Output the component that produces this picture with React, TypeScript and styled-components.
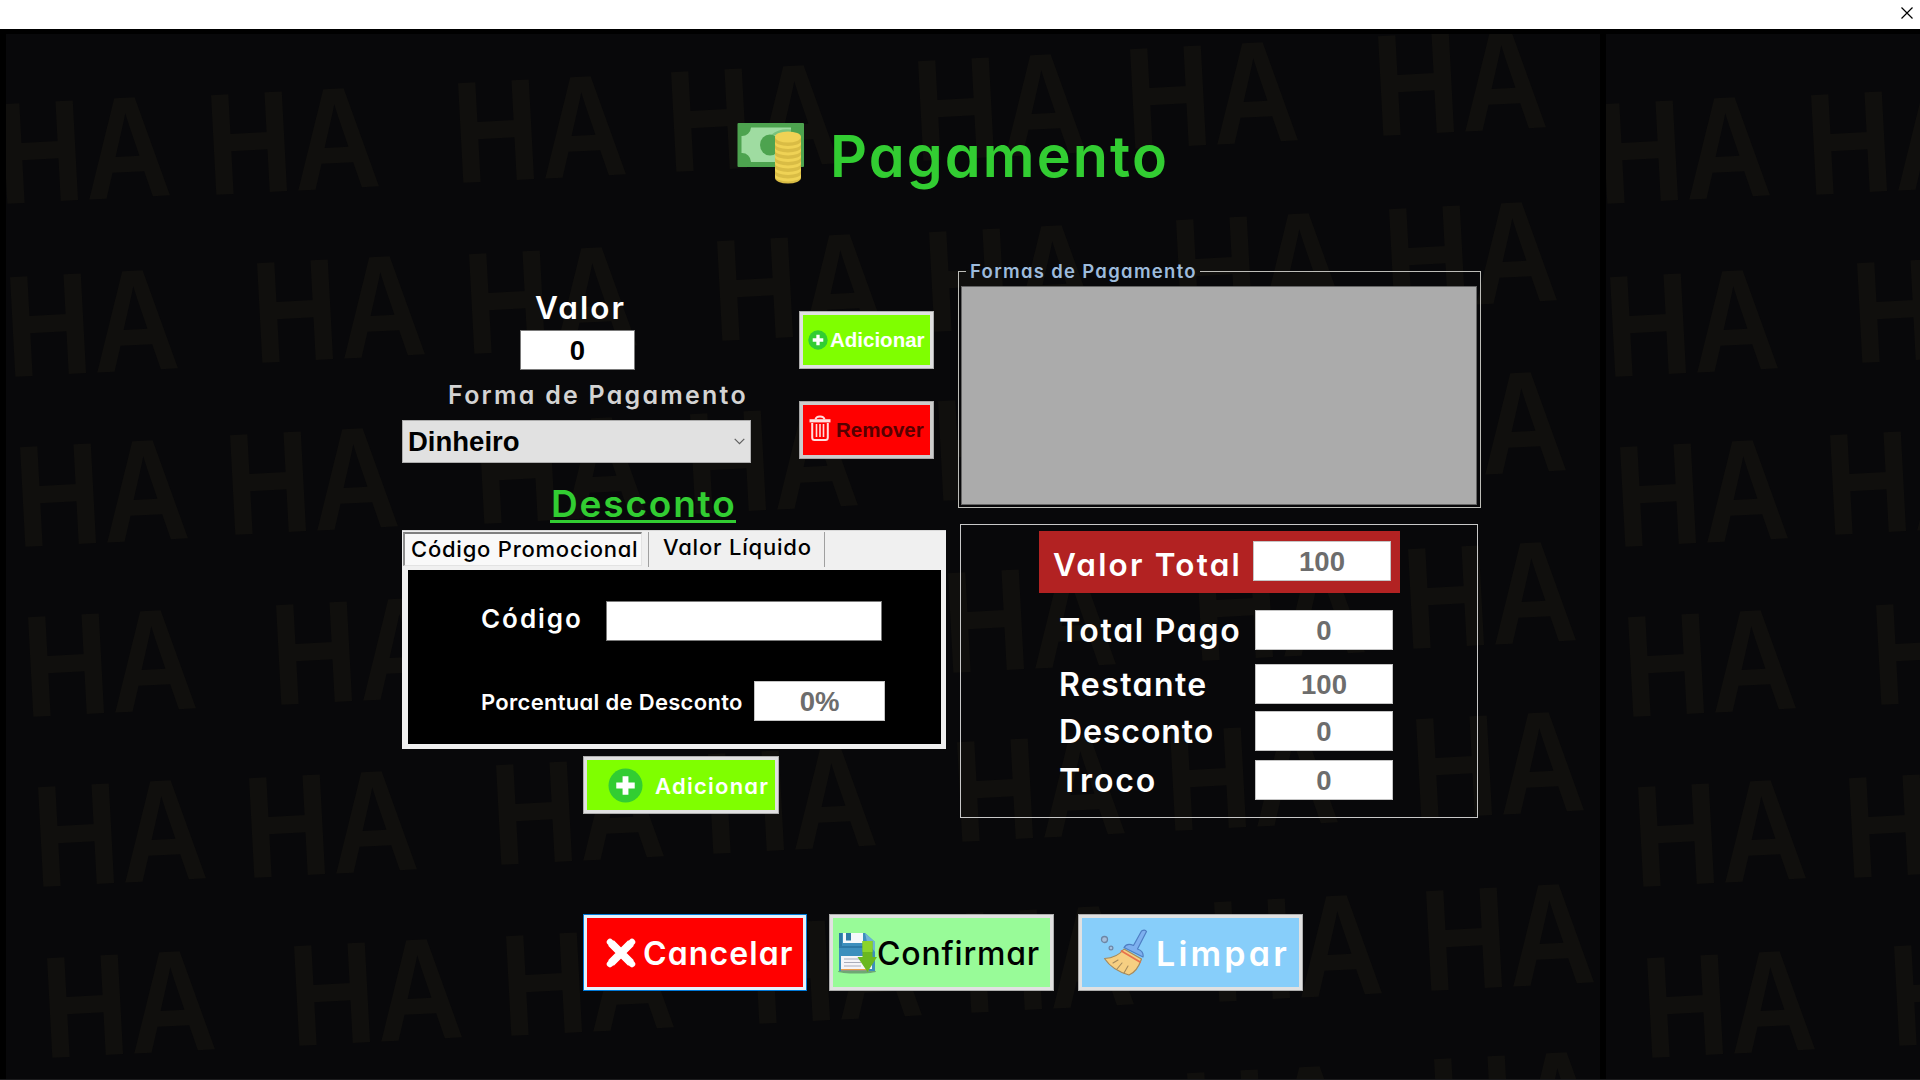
import React from 'react';
import styled, { createGlobalStyle } from 'styled-components';

const GlobalStyle = createGlobalStyle`
  * { box-sizing: border-box; }
  body { margin: 0; background: #08080a; overflow: hidden; }
`;

const ROUND_FONT = "Inter, 'Liberation Sans', sans-serif";
const UI_FONT = "'Liberation Sans', Arial, sans-serif";

const Shell = styled.div`
  display: flex;
  flex-direction: column;
  width: 1920px;
  height: 1080px;
  overflow: hidden;
`;

const TitleBar = styled.header`
  display: flex;
  justify-content: flex-end;
  height: 29px;
  padding: 7px 7px 0 0;
  background: #fff;
`;

const Stage = styled.main`
  position: relative;
  flex: 1;
  border-top: 5px solid #000;
  background: #08080a;
  overflow: hidden;
`;

const Wallpaper = styled.svg`
  position: absolute;
  left: 0;
  top: 0;
  font: bold 145px ${UI_FONT};
  fill: #100f0d;
`;

const Content = styled.div`
  position: relative;
  padding-left: 402px;
`;

const Heading = styled.div`
  display: flex;
  align-items: flex-start;
  height: 238px;
  padding: 87px 0 0 335px;
`;

const Columns = styled.div`
  display: flex;
  gap: 11px;
  height: 545px;
`;

const LeftColumn = styled.section`
  width: 545px;
`;

const RightColumn = styled.section`
  width: 524px;
`;

interface LabelProps {
  $size: number;
  $h: number;
  $gap?: number;
  $weight?: number;
  $color?: string;
  $w?: number;
  $m?: string;
}

/* The box height equals the cap height, so margins are measured from the capitals. */
const Label = styled.div<LabelProps>`
  display: block;
  flex: none;
  width: ${p => (p.$w ? `${p.$w}px` : 'auto')};
  height: ${p => p.$h}px;
  margin: ${p => p.$m ?? '0'};
  font: ${p => p.$weight ?? 600} ${p => p.$size}px / ${p => p.$h}px ${ROUND_FONT};
  font-feature-settings: 'cv11';
  letter-spacing: ${p => p.$gap ?? 0}px;
  color: ${p => p.$color ?? '#fff'};
  white-space: nowrap;
`;

const PayRow = styled.div`
  display: flex;
  height: 191px;
`;

const PayFields = styled.div`
  width: 349px;
`;

const PayActions = styled.div`
  display: flex;
  flex-direction: column;
  gap: 32px;
  width: 135px;
  margin: 39px 0 0 48px;
`;

const Field = styled.div<{ $w: number; $muted?: boolean; $m?: string }>`
  flex: none;
  width: ${p => p.$w}px;
  height: 40px;
  margin: ${p => p.$m ?? '0'};
  border: 1px solid ${p => (p.$muted ? '#c4c4c4' : '#7a7a7a')};
  background: #fff;
  color: ${p => (p.$muted ? '#6d6d6d' : '#000')};
  font: bold 27.500px / 39px ${UI_FONT};
  text-align: center;
`;

const Select = styled.div`
  display: flex;
  align-items: center;
  justify-content: space-between;
  height: 43px;
  margin-top: 16px;
  padding: 0 5px;
  border: 1px solid #adadad;
  background: #e1e1e1;
  color: #000;
  font: bold 27.500px / 43px ${UI_FONT};
`;

const Button = styled.button<{ $bg: string; $w: number; $h: number; $pad: number; $gap: number; $m?: string; $edge?: string; $ring?: string }>`
  display: flex;
  align-items: center;
  gap: ${p => p.$gap}px;
  flex: none;
  width: ${p => p.$w}px;
  height: ${p => p.$h}px;
  margin: ${p => p.$m ?? '0'};
  padding: 0 0 0 ${p => p.$pad}px;
  border: 1px solid ${p => p.$edge ?? '#adadad'};
  background: ${p => p.$bg};
  box-shadow: inset 0 0 0 3px ${p => p.$ring ?? '#e1e1e1'};
`;

const ButtonText = styled.span<{ $color: string }>`
  color: ${p => p.$color};
  font: bold 20.500px / 24px ${UI_FONT};
`;

const DiscountTitle = styled.div`
  width: 186px;
  height: 32px;
  margin: 28px 0 0 148px;
  border-bottom: 3px solid #32cd32;
`;

const TabControl = styled.div`
  width: 544px;
  height: 219px;
  margin-top: 7px;
  padding: 1px 5px 5px 6px;
  border-top: 1px solid #d9d9d9;
  background: #f0f0f0;
`;

const TabBar = styled.div`
  display: flex;
  height: 38px;
`;

const ActiveTab = styled.div`
  width: 239px;
  height: 34px;
  margin-left: -5px;
  padding: 7px 0 0 6px;
  border: 1px solid #e3e3e3;
  border-top: 2px solid #808080;
  border-left: 2px solid #8f8f8f;
  background: #f9f9f9;
`;

const Tab = styled.div`
  width: 177px;
  height: 35px;
  margin-left: 6px;
  padding: 7px 0 0 14px;
  border-left: 1px solid #a0a0a0;
  border-right: 1px solid #a0a0a0;
`;

const TabPage = styled.div`
  height: 174px;
  padding: 31px 0 0 73px;
  background: #000;
`;

const PageRow = styled.div<{ $top?: number }>`
  display: flex;
  align-items: center;
  height: 40px;
  margin-top: ${p => p.$top ?? 0}px;
`;

const GroupBox = styled.fieldset`
  width: 523px;
  height: 243px;
  min-width: 0;
  margin: -7px 0 0;
  padding: 0 3px 3px 2px;
  border: 1px solid #bdbdb8;
`;

const Legend = styled.legend`
  width: 234px;
  height: 13px;
  margin-left: 5px;
  padding: 0 0 0 4px;
`;

const DataGrid = styled.div`
  height: 219px;
  margin-top: 8px;
  border: 1px solid #646464;
  background: #ababab;
`;

const Totals = styled.div`
  width: 518px;
  height: 294px;
  margin: 16px 0 0 2px;
  padding-top: 6px;
  border: 1px solid #c8c8c8;
`;

const GrandTotal = styled.div`
  display: flex;
  width: 361px;
  height: 62px;
  margin-left: 78px;
  padding: 10px 0 0 14px;
  background: #b22222;
`;

const TotalRow = styled.div<{ $top: number }>`
  display: flex;
  align-items: center;
  height: 40px;
  margin: ${p => p.$top}px 0 0 98px;
`;

const Footer = styled.footer`
  display: flex;
  margin: 97px 0 0 181px;
`;

const TILE_GROUPS: [number, number][][] = [
  [[2, 103], [211, 94], [458, 82], [671, 71], [918, 60], [1130, 48], [1378, 35]],
  [[10, 276], [257, 262], [469, 253], [717, 240], [929, 231], [1176, 219], [1389, 208]],
  [[20, 446], [230, 434], [479, 423], [690, 413], [938, 400], [1150, 390], [1398, 378]],
  [[28, 616], [276, 604], [488, 594], [735, 582], [948, 572], [1197, 560], [1408, 548]],
  [[38, 786], [249, 777], [496, 764], [708, 753], [957, 741], [1170, 730], [1416, 718]],
  [[47, 957], [294, 945], [506, 935], [754, 923], [966, 912], [1214, 901], [1426, 890]],
  [[1187, 1072], [1434, 1058]],
];

function Tile({ x }: { x: number }) {
  return (
    <g transform={`translate(${x} -34)`}>
      {TILE_GROUPS.flat().map(([gx, gy]) => (
        <text key={`${gx}-${gy}`} transform={`translate(${gx} ${gy}) rotate(-3)`} x={-8} y={101} textLength={174} lengthAdjust="spacingAndGlyphs">
          HA
        </text>
      ))}
    </g>
  );
}

function Backdrop() {
  return (
    <Wallpaper width="1920" height="1046" aria-hidden="true">
      <Tile x={0} />
      <Tile x={1600} />
      <rect x="0" y="0" width="6" height="1046" fill="#000" />
      <rect x="1600" y="0" width="6" height="1046" fill="#000" />
      <rect x="0" y="1045" width="1920" height="1" fill="#1c1c1e" />
    </Wallpaper>
  );
}

function MoneyIcon() {
  const rims = [0, 1, 2, 3, 4, 5];
  return (
    <svg width="68" height="64" viewBox="0 0 68 64">
      <rect x="0.5" y="2" width="66.5" height="44" rx="1" fill="#4da34f" />
      <path d="M14 6.500H54A9 9 0 0 0 63 15V32A9 9 0 0 0 54 41H14A9 9 0 0 0 4.500 32V15A9 9 0 0 0 14 6.500Z" fill="#9fdca1" />
      <ellipse cx="33" cy="24" rx="10" ry="10.500" fill="#4da34f" />
      <path d="M34 14Q42 7 54 8.500L64 16V46H54V14Z" fill="#4da34f" opacity=".45" />
      <path d="M54 6.500H63V42H54Z" fill="#4da34f" />
      <path d="M38 16V57A13 5.500 0 0 0 64 57V16Z" fill="#d9bc45" />
      {rims.map(i => (
        <path key={i} d={`M38 ${20 + i * 6.500}A13 5 0 0 0 64 ${20 + i * 6.500}V${23 + i * 6.500}A13 5 0 0 1 38 ${23 + i * 6.500}Z`} fill="#efd255" />
      ))}
      <ellipse cx="51" cy="16" rx="13" ry="5.500" fill="#efd255" />
    </svg>
  );
}

function PlusIcon({ size }: { size: number }) {
  return (
    <svg width={size} height={size} viewBox="0 0 36 36">
      <circle cx="18" cy="18" r="17.500" fill="#32cd32" />
      <path d="M15 8.500h6V15h6.500v6H21v6.500h-6V21H8.500v-6H15Z" fill="#fff" />
    </svg>
  );
}

const TrashGlyph = styled.svg`
  margin-bottom: 5px;
`;

function TrashIcon() {
  return (
    <TrashGlyph width="22" height="26" viewBox="0 0 22 26" fill="none" stroke="#ffdede">
      <path d="M6.500 4.500Q7 1.500 11 1.500T15.500 4.500" strokeWidth="2" />
      <path d="M.500 5.800H21.500" strokeWidth="3.200" />
      <path d="M3.200 8V22.500Q3.200 25 5.500 25H16.500Q18.800 25 18.800 22.500V8" strokeWidth="2" />
      <path d="M7.500 9V22M11 9V22M14.500 9V22" strokeWidth="1.600" />
    </TrashGlyph>
  );
}

function CrossIcon() {
  return (
    <svg width="30" height="30" viewBox="0 0 30 30">
      <path d="M5 5L25 25M25 5L5 25" stroke="#fff" strokeWidth="8" strokeLinejoin="round" />
      <path d="M4 4L26 26M26 4L4 26" stroke="#fff" strokeWidth="6.500" strokeLinecap="round" />
    </svg>
  );
}

function SaveIcon() {
  return (
    <svg width="40" height="42" viewBox="0 0 40 42">
      <ellipse cx="20" cy="39.500" rx="19" ry="2" fill="#6fa874" />
      <path d="M2 1H28L38 10V39H2Z" fill="#3c8fbd" />
      <path d="M2 1H5V14H37V16H2Z" fill="#2b78a5" />
      <path d="M28 1L38 10V20L30 10Z" fill="#6fb3d6" />
      <rect x="6" y="1" width="20" height="10" fill="#f4f8fa" />
      <rect x="9" y="1" width="5" height="7.500" fill="#2f7ba6" />
      <rect x="4" y="24" width="31" height="13" fill="#f5f5f8" />
      <path d="M7 27H24M7 30.500H24M7 34H24" stroke="#a9adbb" strokeWidth="1.200" />
      <rect x="4" y="37" width="28" height="1.500" fill="#e9a04c" />
      <path d="M25.500 9H35.500V25H40L30.500 40L20.500 25H25.500Z" fill="#6ab81f" />
      <path d="M25.500 9H35.500V20H25.500Z" fill="#8bd42a" />
    </svg>
  );
}

function BroomIcon() {
  return (
    <svg width="48" height="48" viewBox="0 0 48 48" strokeLinejoin="round" strokeLinecap="round">
      <circle cx="4.500" cy="10.500" r="3" fill="#a5bedb" stroke="#6d86a5" strokeWidth="1.300" />
      <circle cx="11" cy="19" r="1.900" fill="#a5bedb" stroke="#6d86a5" strokeWidth="1.200" />
      <path d="M24 20Q17 29 4.500 29.500Q12 41 29 46Q37 43 41.500 30Z" fill="#f6cf82" stroke="#a58a5c" strokeWidth="1.200" />
      <path d="M13 34L18 31M17 40L22 34M24 44L28 37" stroke="#a58a5c" strokeWidth="1.100" fill="none" />
      <path d="M21.500 22L40 33" stroke="#e8714c" strokeWidth="1.800" />
      <path d="M41.500 2Q45 0 46.500 2.500L37.500 20Q44 22 43 28L24 18.500Q27 13.500 33.500 16.500Z" fill="#7eb0ef" stroke="#4f7fc4" strokeWidth="1.200" />
    </svg>
  );
}

const TOTALS: { name: string; value: string; top: number; gap: number }[] = [
  { name: 'Total Pago', value: '0', top: 17, gap: 1.7 },
  { name: 'Restante', value: '100', top: 14, gap: 1.4 },
  { name: 'Desconto', value: '0', top: 7, gap: 0.92 },
  { name: 'Troco', value: '0', top: 9, gap: 1.8 },
];

export default function App() {
  return (
    <Shell>
      <GlobalStyle />
      <TitleBar>
        <svg width="12" height="12" viewBox="0 0 12 12">
          <path d="M.5 .5L11.500 11.500M11.500 .5L.5 11.500" stroke="#000" strokeWidth="1.200" />
        </svg>
      </TitleBar>
      <Stage>
        <Backdrop />
        <Content>
          <Heading>
            <MoneyIcon />
            <Label as="h1" $size={57.5} $h={42} $gap={2.1} $color="#32cd32" $m="14px 0 0 25px">Pagamento</Label>
          </Heading>

          <Columns>
            <LeftColumn>
              <PayRow>
                <PayFields>
                  <Label $size={31.5} $h={23} $gap={2.06} $m="24px 0 0 133px">Valor</Label>
                  <Field $w={115} $m="11px 0 0 118px">0</Field>
                  <Label $size={25} $h={18} $gap={2.24} $color="#d3d3d3" $m="16px 0 0 46px">Forma de Pagamento</Label>
                  <Select>
                    Dinheiro
                    <svg width="11" height="7" viewBox="0 0 11 7">
                      <path d="M.7 .8L5.500 5.600L10.300 .8" fill="none" stroke="#606060" strokeWidth="1.200" />
                    </svg>
                  </Select>
                </PayFields>
                <PayActions>
                  <Button $bg="#7fff00" $w={135} $h={58} $pad={8} $gap={2}>
                    <PlusIcon size={20} />
                    <ButtonText $color="#fff">Adicionar</ButtonText>
                  </Button>
                  <Button $bg="#ff0000" $w={135} $h={58} $pad={9} $gap={5} $edge="#a6a6a6" $ring="#cccccc">
                    <TrashIcon />
                    <ButtonText $color="#560000">Remover</ButtonText>
                  </Button>
                </PayActions>
              </PayRow>

              <DiscountTitle>
                <Label as="h2" $size={37} $h={26} $gap={1.83} $color="#32cd32" $m="0 0 0 1px">Desconto</Label>
              </DiscountTitle>

              <TabControl>
                <TabBar>
                  <ActiveTab>
                    <Label $size={22} $h={16} $gap={0.77} $weight={500} $color="#000">Código Promocional</Label>
                  </ActiveTab>
                  <Tab>
                    <Label $size={22} $h={16} $gap={0.8} $weight={500} $color="#000">Valor Líquido</Label>
                  </Tab>
                </TabBar>
                <TabPage>
                  <PageRow>
                    <Label $size={26} $h={19} $gap={1.95} $w={125} $m="0 0 6px">Código</Label>
                    <Field $w={276} />
                  </PageRow>
                  <PageRow $top={40}>
                    <Label $size={22} $h={16} $gap={0.3} $w={273} $m="2px 0 0">Porcentual de Desconto</Label>
                    <Field $w={131} $muted>0%</Field>
                  </PageRow>
                </TabPage>
              </TabControl>

              <Button $bg="#7fff00" $w={196} $h={58} $pad={24} $gap={12} $m="7px 0 0 181px">
                <PlusIcon size={35} />
                <Label as="span" $size={22} $h={16} $gap={1.25} $m="2px 0 0">Adicionar</Label>
              </Button>
            </LeftColumn>

            <RightColumn>
              <GroupBox>
                <Legend>
                  <Label as="span" $size={18.5} $h={13} $gap={1.3} $color="#9dbbdc">Formas de Pagamento</Label>
                </Legend>
                <DataGrid />
              </GroupBox>

              <Totals>
                <GrandTotal>
                  <Label $size={31.5} $h={23} $gap={2.2} $w={200} $m="12px 0 0">Valor Total</Label>
                  <Field $w={138} $muted>100</Field>
                </GrandTotal>
                {TOTALS.map(t => (
                  <TotalRow key={t.name} $top={t.top}>
                    <Label $size={32} $h={23} $gap={t.gap} $w={196} $m="1px 0 0">{t.name}</Label>
                    <Field $w={138} $muted>{t.value}</Field>
                  </TotalRow>
                ))}
              </Totals>
            </RightColumn>
          </Columns>

          <Footer>
            <Button $bg="#ff0000" $w={224} $h={77} $pad={22} $gap={7} $edge="#0078d7" $ring="#e5f1fb">
              <CrossIcon />
              <Label as="span" $size={32} $h={23} $gap={1.1} $m="2px 0 0">Cancelar</Label>
            </Button>
            <Button $bg="#98fb98" $w={225} $h={77} $pad={7} $gap={0} $m="0 0 0 22px">
              <SaveIcon />
              <Label as="span" $size={32} $h={23} $gap={0.81} $weight={500} $color="#000" $m="2px 0 0">Confirmar</Label>
            </Button>
            <Button $bg="#87cefa" $w={225} $h={77} $pad={21} $gap={8} $m="0 0 0 24px">
              <BroomIcon />
              <Label as="span" $size={34} $h={24} $gap={3.2} $m="2px 0 0">Limpar</Label>
            </Button>
          </Footer>
        </Content>
      </Stage>
    </Shell>
  );
}
